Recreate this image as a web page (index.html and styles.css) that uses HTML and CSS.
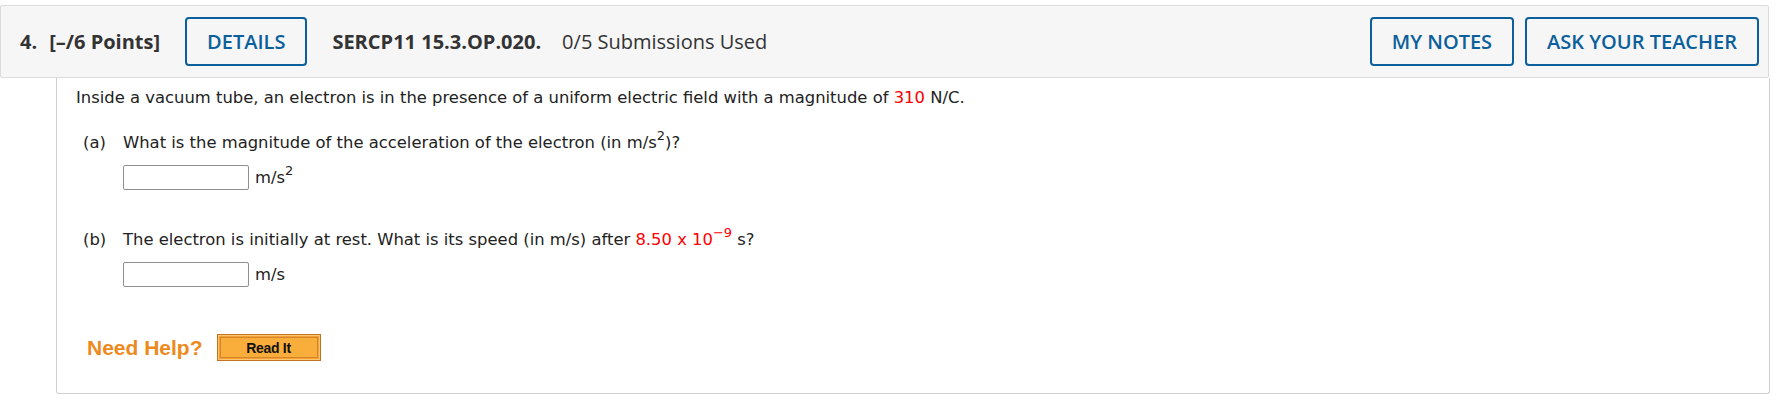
FILE: index.html
```html
<!DOCTYPE html>
<html lang="en">
<head>
<meta charset="utf-8">
<title>Question 4</title>
<link rel="stylesheet" href="styles.css">
</head>
<body>
<div class="header">
  <div class="hleft">
    <span class="qnum">4.</span>
    <span class="pts">[–/6 Points]</span>
    <button class="btn btn-details">DETAILS</button>
    <span class="code">SERCP11 15.3.OP.020.</span>
    <span class="subs">0/5 Submissions Used</span>
  </div>
  <div class="hright">
    <button class="btn">MY NOTES</button>
    <button class="btn">ASK YOUR TEACHER</button>
  </div>
</div>
<div class="content">
  <p class="intro">Inside a vacuum tube, an electron is in the presence of a uniform electric field with a magnitude of <span class="red">310</span> N/C.</p>
  <div class="part">
    <div class="plabel">(a)</div>
    <div class="pbody">
      <div class="ptext">What is the magnitude of the acceleration of the electron (in m/s<sup>2</sup>)?</div>
      <div class="answer"><input class="ans" type="text"><span class="unit">m/s<sup>2</sup></span></div>
    </div>
  </div>
  <div class="part part-b">
    <div class="plabel">(b)</div>
    <div class="pbody">
      <div class="ptext">The electron is initially at rest. What is its speed (in m/s) after <span class="red">8.50 x 10<sup>−9</sup></span> s?</div>
      <div class="answer"><input class="ans" type="text"><span class="unit">m/s</span></div>
    </div>
  </div>
  <div class="help">
    <span class="need">Need Help?</span>
    <span class="readit">Read It</span>
  </div>
</div>
</body>
</html>
```

FILE: styles.css
```css
* { box-sizing: border-box; }
body {
  margin: 0;
  background: #fff;
  font-family: "Open Sans", "Liberation Sans", sans-serif;
  color: #333;
}
.header {
  margin-top: 5px;
  width: 1769px;
  height: 73px;
  border: 1px solid #dcdcdc;
  border-radius: 2px;
  background: #f6f6f6;
  display: flex;
  align-items: center;
  justify-content: space-between;
  padding: 0 9px 0 19px;
}
.hleft, .hright {
  display: flex;
  align-items: center;
}
.qnum, .pts, .code {
  font-weight: 700;
  font-size: 20px;
  color: #333;
}
.pts { margin-left: 12px; }
.btn {
  height: 49px;
  border: 2px solid #0b609b;
  border-radius: 4px;
  background: transparent;
  color: #0b609b;
  font-family: "Open Sans", "Liberation Sans", sans-serif;
  font-size: 20px;
  font-weight: 600;
  padding: 0 20px;
}
.btn-details { margin-left: 25px; }
.hright .btn + .btn { margin-left: 11px; }
.code { margin-left: 25px; }
.subs {
  margin-left: 21px;
  font-size: 20px;
  color: #333;
}
.content {
  margin-left: 56px;
  width: 1714px;
  height: 316px;
  border: 1px solid #cfcfcf;
  border-top: none;
  border-radius: 0 0 3px 3px;
  padding: 10px 0 0 19px;
  font-family: "DejaVu Sans", Verdana, sans-serif;
  font-size: 16.4px;
  color: #222;
}
.intro {
  margin: 0;
  line-height: 20px;
}
.red { color: #f00; }
sup {
  font-size: 13px;
  line-height: 0;
  vertical-align: 8px;
}
.part {
  display: flex;
  margin-top: 25px;
  padding-left: 7px;
}
.part-b { margin-top: 40px; }
.plabel { width: 40px; line-height: 20px; }
.ptext { line-height: 20px; }
.answer {
  display: flex;
  align-items: center;
  margin-top: 12px;
}
.ans {
  width: 126px;
  height: 25px;
  border: 1px solid #8f8f8f;
  border-radius: 2px;
  margin: 0;
}
.unit { margin-left: 6px; line-height: 20px; }
.help {
  display: flex;
  align-items: center;
  margin-top: 47px;
  padding-left: 11px;
}
.need {
  font-family: "Liberation Sans", Arial, sans-serif;
  font-weight: 700;
  font-size: 21px;
  color: #ee8a1d;
}
.readit {
  margin-left: 14px;
  width: 104px;
  height: 27px;
  border: 1px solid #c2731f;
  background: #f9ae3c;
  box-shadow: inset 0 0 0 1px #fcc670, inset 0 0 0 2px #f39f32, inset 0 0 0 3px #d68628;
  display: flex;
  align-items: center;
  justify-content: center;
  font-family: "Liberation Sans", Arial, sans-serif;
  font-weight: 700;
  font-size: 14px;
  letter-spacing: -0.3px;
  color: #111;
}
```
